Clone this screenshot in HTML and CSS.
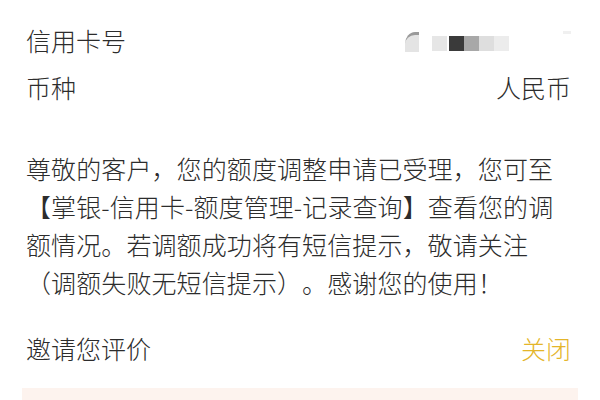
FILE: index.html
```html
<!DOCTYPE html>
<html lang="zh-CN">
<head>
<meta charset="utf-8">
<link rel="stylesheet" href="styles.css">
</head>
<body>
<div class="page">
  <div class="row first">
    <span class="label">信用卡号</span>
    <span class="masked">
      <span class="curl"></span>
      <span class="blk b1"></span><span class="blk b2"></span><span class="blk b3"></span><span class="blk b4"></span><span class="blk b5"></span>
      <span class="faint"></span>
    </span>
  </div>
  <div class="row">
    <span class="label">币种</span>
    <span class="value">人民币</span>
  </div>
  <p class="notice">尊敬的客户，您的额度调整申请已受理，您可至【掌银-信用卡-额度管理-记录查询】查看您的调额情况。若调额成功将有短信提示，敬请关注（调额失败无短信提示）。感谢您的使用！</p>
  <div class="row rate">
    <span class="label">邀请您评价</span>
    <span class="close">关闭</span>
  </div>
  <div class="strip"></div>
</div>
</body>
</html>
```
FILE: styles.css
```css
html, body {
  margin: 0;
  padding: 0;
  background: #ffffff;
}
.page {
  width: 600px;
  height: 400px;
  overflow: hidden;
  font-family: "Noto Sans CJK SC", "Noto Sans", sans-serif;
  font-size: 25px;
  font-weight: 300;
  color: #2c2c2c;
  padding-top: 17px;
  box-sizing: border-box;
  text-spacing-trim: space-all;
}
.row {
  height: 47px;
  display: flex;
  justify-content: space-between;
  align-items: center;
  padding: 0 29px 0 26px;
}
.label, .value, .close {
  line-height: 1;
}
.masked {
  display: flex;
  align-items: center;
  height: 24px;
  width: 166px;
  position: relative;
}
.curl {
  width: 14px;
  height: 20px;
  background: #e4e4e4;
  border-top-left-radius: 10px 12px;
  border-top: 3px solid #9a9a9a;
  box-sizing: border-box;
  margin-right: 13px;
  margin-top: 2px;
}
.blk {
  width: 15px;
  height: 15px;
  margin-top: 6px;
}
.b1 { background: #e6e6e6; margin-right: 2px; }
.b2 { background: #3a3a3a; }
.b3 { background: #a8a8a8; }
.b4 { background: #dedede; }
.b5 { background: #ececec; }
.faint {
  position: absolute;
  right: 0;
  top: 2px;
  width: 8px;
  height: 3px;
  background: #f0f0f0;
}
.notice {
  margin: 38px 0 0 0;
  padding: 0 29px 0 26px;
  line-height: 38px;
  letter-spacing: 0.1px;
}
.rate {
  margin-top: 24px;
}
.close {
  color: #e4b52a;
}
.strip {
  margin: 16px 22px 0 22px;
  height: 20px;
  background: #fdf3ee;
}
```
